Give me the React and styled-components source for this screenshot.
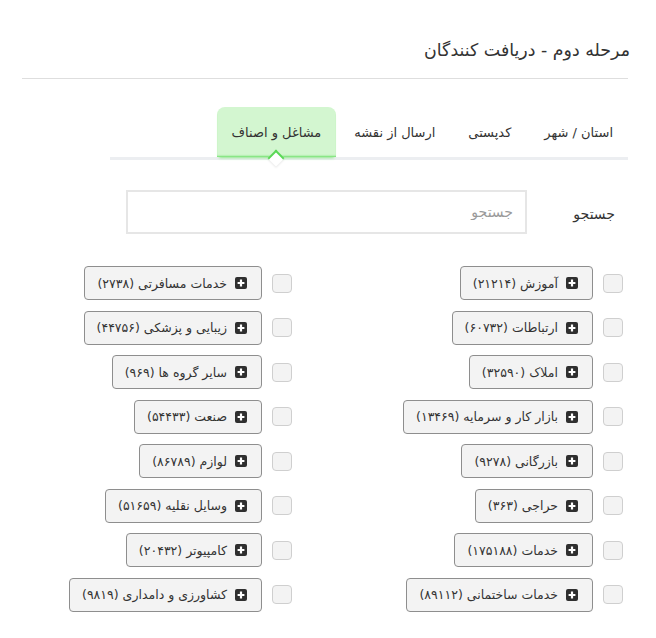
import React from 'react';
import styled, { createGlobalStyle } from 'styled-components';

const GlobalStyle = createGlobalStyle`
  html, body {
    margin: 0;
    padding: 0;
    background: #fff;
  }
  body {
    font-family: "DejaVu Sans", "Noto Sans", sans-serif;
    color: #333;
  }
`;

const categories = [
  ['آموزش (۲۱۲۱۴)', 'خدمات مسافرتی (۲۷۳۸)'],
  ['ارتباطات (۶۰۷۳۲)', 'زیبایی و پزشکی (۴۴۷۵۶)'],
  ['املاک (۳۲۵۹۰)', 'سایر گروه ها (۹۶۹)'],
  ['بازار کار و سرمایه (۱۳۴۶۹)', 'صنعت (۵۴۴۳۳)'],
  ['بازرگانی (۹۲۷۸)', 'لوازم (۸۶۷۸۹)'],
  ['حراجی (۳۶۳)', 'وسایل نقلیه (۵۱۶۵۹)'],
  ['خدمات (۱۷۵۱۸۸)', 'کامپیوتر (۲۰۴۳۲)'],
  ['خدمات ساختمانی (۸۹۱۱۲)', 'کشاورزی و دامداری (۹۸۱۹)'],
];

const tabs = ['استان / شهر', 'کدپستی', 'ارسال از نقشه', 'مشاغل و اصناف'];

function PlusIcon() {
  return (
    <svg width="12" height="12" viewBox="0 0 12 12">
      <rect x="0" y="0" width="12" height="12" rx="2" fill="#2f2f2f" />
      <path d="M6 2.6v6.8M2.6 6h6.8" stroke="#fff" strokeWidth="2.2" />
    </svg>
  );
}

function App() {
  const rows = categories.flat();
  return (
    <Page dir="rtl">
      <GlobalStyle />
      <Title>مرحله دوم - دریافت کنندگان</Title>
      <Rule />
      <TabNav>
        {tabs.map((t, i) => (
          <Tab key={t} $active={i === tabs.length - 1}>
            {t}
          </Tab>
        ))}
      </TabNav>
      <SearchRow>
        <SearchLabel>جستجو</SearchLabel>
        <SearchInput placeholder="جستجو" />
      </SearchRow>
      <Grid>
        {rows.map((c) => (
          <Item key={c}>
            <Check />
            <CatButton>
              <PlusIcon />
              <span>{c}</span>
            </CatButton>
          </Item>
        ))}
      </Grid>
    </Page>
  );
}

const Page = styled.div`
  width: 606px;
  padding: 37px 28px 20px 22px;
`;

const Title = styled.div`
  font-size: 17.4px;
  line-height: 26px;
  margin-right: -2px;
`;

const Rule = styled.div`
  height: 1px;
  background: #dedede;
  margin-top: 15px;
`;

const TabNav = styled.div`
  display: flex;
  margin: 28px 0 0 88px;
  border-bottom: 3px solid #eceef1;
  height: 50px;
`;

const Tab = styled.div`
  position: relative;
  height: 50px;
  padding: 0 15px;
  margin-left: 3px;
  display: flex;
  align-items: center;
  font-size: 13px;
  color: #333;
  border-radius: 8px 8px 0 0;
  background: ${(p) => (p.$active ? '#d3f6d0' : 'transparent')};
  box-shadow: ${(p) => (p.$active ? 'inset 0 -2px 2px -1px #6ee06a, 0 3px 3px -2px #8de889' : 'none')};

  &::after {
    content: '';
    display: ${(p) => (p.$active ? 'block' : 'none')};
    position: absolute;
    left: 50%;
    bottom: -7px;
    width: 12px;
    height: 12px;
    margin-left: -6px;
    background: #fff;
    transform: rotate(45deg);
    border-top: 2px solid #5ad856;
    border-left: 2px solid #5ad856;
    box-sizing: border-box;
    box-shadow: 1px 1px 2px rgba(0, 0, 0, 0.08);
  }
`;

const SearchRow = styled.div`
  display: flex;
  align-items: center;
  margin-top: 30px;
`;

const SearchLabel = styled.div`
  width: 88px;
  padding-right: 13px;
  font-size: 14px;
  margin-top: 3px;
`;

const SearchInput = styled.input`
  width: 401px;
  height: 44px;
  box-sizing: border-box;
  border: 2px solid #e6e6e6;
  padding: 0 12px;
  font-family: inherit;
  font-size: 14px;
  color: #333;
  outline: none;

  &::placeholder {
    color: #9a9a9a;
  }
`;

const Grid = styled.div`
  display: grid;
  grid-template-columns: 1fr 1fr;
  column-gap: 61px;
  padding-right: 5px;
  margin-top: 32px;
`;

const Item = styled.div`
  display: flex;
  align-items: center;
  height: 34px;
  margin-bottom: 10.57px;
`;

const Check = styled.span`
  width: 20px;
  height: 19px;
  box-sizing: border-box;
  border: 1px solid #cfcfcf;
  border-radius: 4px;
  background: #f3f3f3;
  margin-left: 10px;
  flex-shrink: 0;
`;

const CatButton = styled.div`
  display: flex;
  align-items: center;
  gap: 8px;
  height: 34px;
  box-sizing: border-box;
  padding: 0 14px 0 12px;
  border: 1px solid #8e8e8e;
  border-radius: 4px;
  background: #f3f3f3;
  font-size: 12.5px;
  color: #333;
  white-space: nowrap;
`;

export default App;
